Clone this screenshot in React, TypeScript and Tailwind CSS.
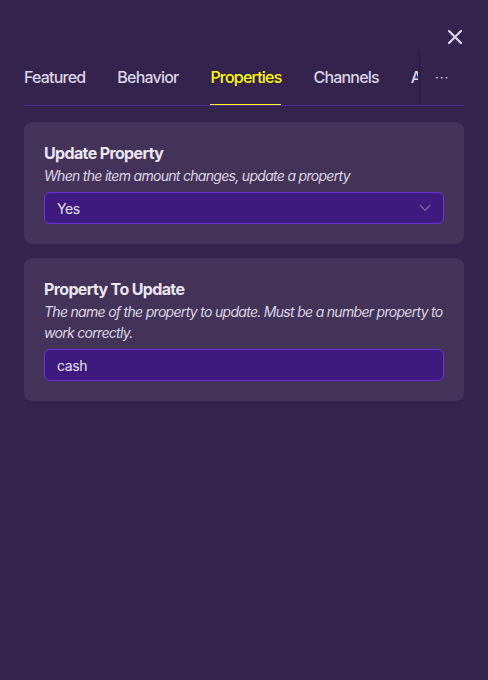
import React from "react";

function Card({ title, desc, children }: { title: string; desc: string; children: React.ReactNode }) {
  return (
    <div className="rounded-lg bg-[#433358] px-5 pt-[19px] pb-5">
      <div className="text-[16px] leading-6 font-bold text-[#ebe5f4] tracking-[-0.04em]">{title}</div>
      <div className="text-[14px] leading-[21px] italic text-[#ddd5e8] tracking-[-0.05em]">{desc}</div>
      <div className="mt-[6px]">{children}</div>
    </div>
  );
}

export default function App() {
  const tabs = ["Featured", "Behavior", "Properties", "Channels", "A"];
  return (
    <div
      className="w-[488px] h-[680px] bg-[#33234d] flex flex-col px-6 overflow-hidden"
      style={{ fontFamily: "Inter, 'Noto Sans', sans-serif" }}
    >
      <div className="flex justify-end pt-[29px] pr-[1px] h-[60px]">
        <svg width="16" height="16" viewBox="0 0 16 16" className="text-[#ddd5e8]">
          <path d="M2 2 L14 14 M14 2 L2 14" stroke="currentColor" strokeWidth="2.2" strokeLinecap="round" />
        </svg>
      </div>
      <div className="relative flex items-end h-[46px] border-b border-[#4a2c9c]">
        <div className="flex gap-8 overflow-hidden w-[394px]">
          {tabs.map((t) => (
            <div
              key={t}
              className={
                "relative pb-[18px] text-[16px] leading-[20px] font-medium whitespace-nowrap tracking-[-0.05em] " +
                (t === "Properties" ? "text-[#ffff00]" : "text-[#ddd5e8]")
              }
            >
              {t}
              {t === "Properties" && (
                <div className="absolute left-0 right-0 bottom-[-1px] h-[2px] bg-[#ffff00]" />
              )}
            </div>
          ))}
        </div>
        <div className="w-[3px] h-[55px] bg-gradient-to-r from-[#33234d] via-[#2b1e44] to-[#33234d] self-end" />
        <div className="ml-[14px] pb-[19px] text-[13px] leading-[18px] text-[#ddd5e8] tracking-[1px]">···</div>
      </div>
      <div className="flex flex-col gap-[14px] mt-4">
        <Card title="Update Property" desc="When the item amount changes, update a property">
          <div className="flex items-center justify-between h-8 rounded-md border border-[#6a30d8] bg-[#3e1a7f] pl-3 pr-3">
            <span className="text-[14px] text-[#e6e0f0] tracking-[-0.03em]">Yes</span>
            <svg width="12" height="8" viewBox="0 0 12 8">
              <path d="M1 1 L6 6.5 L11 1" stroke="#7a5aa8" strokeWidth="1.3" fill="none" />
            </svg>
          </div>
        </Card>
        <Card
          title="Property To Update"
          desc="The name of the property to update. Must be a number property to work correctly."
        >
          <div className="flex items-center h-8 rounded-md border border-[#6a30d8] bg-[#3e1a7f] pl-3">
            <span className="text-[14px] text-[#e6e0f0] tracking-[-0.03em]">cash</span>
          </div>
        </Card>
      </div>
    </div>
  );
}
